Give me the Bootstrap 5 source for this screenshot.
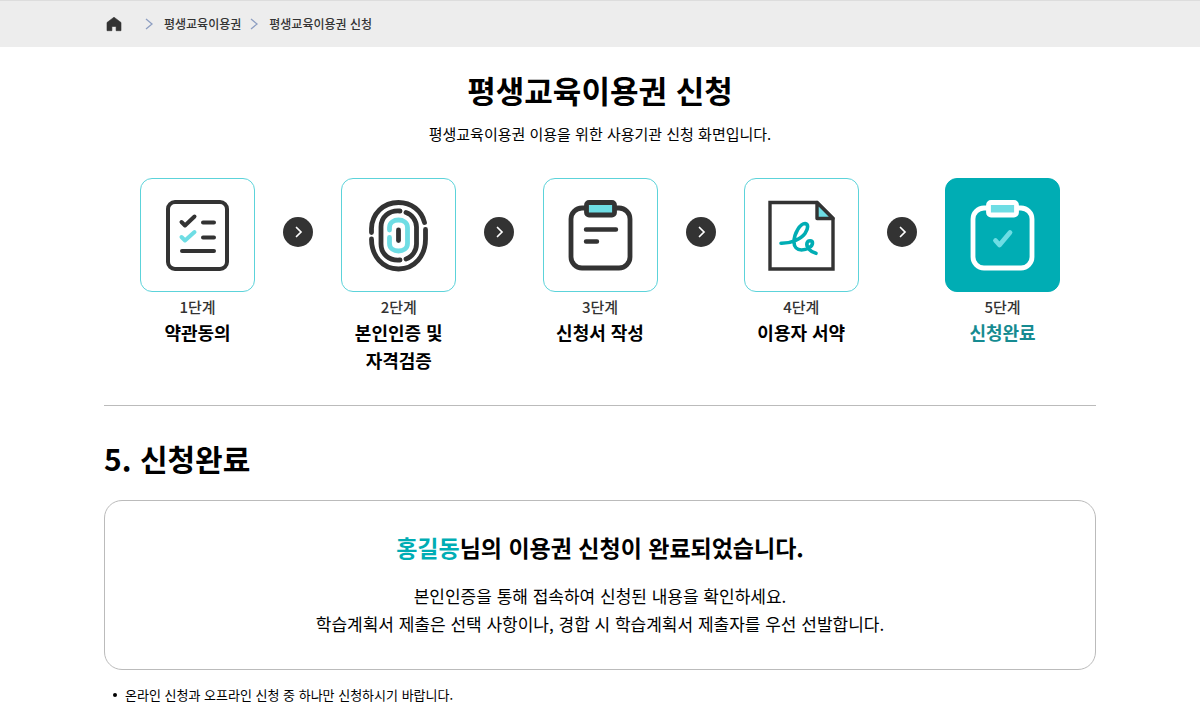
<!DOCTYPE html>
<html lang="ko">
<head>
<meta charset="utf-8">
<meta name="viewport" content="width=device-width, initial-scale=1">
<title>평생교육이용권 신청</title>
<link href="https://cdn.jsdelivr.net/npm/bootstrap@5.3.0/dist/css/bootstrap.min.css" rel="stylesheet">
<style>
  :root { --teal: #00adb4; --ink: #333; }
  body { font-family: "Noto Sans CJK KR", sans-serif; font-size: 15px; line-height: 24px; color: #000; background: #fff; }
  .page-width { padding-inline: 104px; }
  .crumb-bar { background: #ededed; border-top: 1px solid #ddd; }
  .crumb-bar ol { min-height: 46px; font-size: 12px; gap: 4px; }
  .crumb-bar a { color: var(--ink); text-decoration: none; font-weight: 500; }
  .crumb-bar li:first-child { margin-right: 16px; }
  .page-title { font-size: 31px; line-height: 44px; font-weight: 700; margin-bottom: 10px; }
  .intro { padding-top: 21px; }
  .step-list { padding: 32px 36px 0; }
  .step-item { width: 115px; }
  .step-tile { height: 114px; border: 1px solid #5cd3da; border-radius: 12px; }
  .step-label { font-weight: 500; line-height: 23px; color: var(--ink); margin-top: 3px; }
  .step-name { font-size: 18px; line-height: 28px; font-weight: 700; }
  .step-item.current .step-tile { background: var(--teal); border-color: var(--teal); }
  .step-item.current .step-name { color: #168b91; }
  .step-arrow { width: 30px; height: 30px; margin-top: 39px; }
  .rule-line { border-top: 1px solid #bbb; margin-top: 31px; }
  .section-title { font-size: 30px; line-height: 44px; font-weight: 700; margin: 30px 0 20px; }
  .result-box { border: 1px solid #bbb; border-radius: 18px; padding: 30px 24px 31px; }
  .result-title { font-size: 23px; line-height: 32px; font-weight: 700; margin-bottom: 19px; }
  .result-title span { color: var(--teal); }
  .result-text { font-size: 17px; line-height: 28px; }
  .notes { font-size: 13px; margin-top: 13px; padding-left: 9px; }
  .dot-item { gap: 8px; }
  .dot-item::before { content: ""; width: 4px; height: 4px; border-radius: 50%; background: #000; }
  svg { display: block; }
</style>
</head>
<body>
<header class="crumb-bar">
  <nav class="page-width" aria-label="위치">
    <ol class="list-unstyled d-flex align-items-center mb-0">
      <li><a href="#" aria-label="홈"><svg width="20" height="20" viewBox="0 0 20 20"><path d="M10 3.2 3 8.500V16.700h4.900v-4.200h4.200v4.200H17V8.500z" fill="#333" stroke="#333" stroke-linejoin="round" stroke-width=".6"/></svg></a></li>
      <li class="d-flex align-items-center"><svg class="me-2" width="12" height="14" viewBox="0 0 12 14"><path d="m2 2 6 5-6 5" fill="none" stroke="#8e9fc2" stroke-width="1.300"/></svg><a href="#">평생교육이용권</a></li>
      <li class="d-flex align-items-center ms-1"><svg class="me-2" width="12" height="14" viewBox="0 0 12 14"><path d="m2 2 6 5-6 5" fill="none" stroke="#8e9fc2" stroke-width="1.300"/></svg><a href="#" aria-current="page">평생교육이용권 신청</a></li>
    </ol>
  </nav>
</header>

<main class="page-width pb-3">
  <div class="intro text-center">
    <h1 class="page-title">평생교육이용권 신청</h1>
    <p class="mb-0">평생교육이용권 이용을 위한 사용기관 신청 화면입니다.</p>
  </div>

  <ol class="step-list list-unstyled d-flex justify-content-between text-center mb-0">
    <li class="step-item">
      <div class="step-tile d-flex align-items-center justify-content-center">
        <svg width="113" height="113" viewBox="0 0 113 113" fill="none" stroke="#333" stroke-width="4" stroke-linecap="round" stroke-linejoin="round"><rect x="27" y="23" width="59" height="67" rx="7"/><path d="m40.500 43 3.500 3.500 9.500-9M62 43.500h11M62 58.500h11M41 72h32"/><path d="m40.500 58 3.500 3.500 9.500-8.500" stroke="#6edde4"/></svg>
      </div>
      <div class="step-label">1단계</div>
      <div class="step-name">약관동의</div>
    </li>
    <li class="step-arrow" aria-hidden="true"><svg width="30" height="30" viewBox="0 0 30 30"><circle cx="15" cy="15" r="15" fill="#333"/><path d="m13.500 10.500 4.500 4.500-4.500 4.500" fill="none" stroke="#fff" stroke-width="1.700" stroke-linecap="round"/></svg></li>
    <li class="step-item">
      <div class="step-tile d-flex align-items-center justify-content-center">
        <svg width="113" height="113" viewBox="0 0 113 113" fill="none" stroke="#333" stroke-width="4.800" stroke-linecap="round"><path d="M29.500 53.500v-4C30 35 41 23.500 56.500 23.500c13 0 23 8 26 20"/><path d="M29.500 60c0 17 11 30 27 30s27-13 27-30v-9.500"/><path d="M58 32c-11-1-19 6-19 16v17c0 10 8 17 19 16M64 33.500c6 2 10.500 8 10.500 14.500v17c0 7-4.500 13-10.500 15"/><path d="M47.500 51v-2.500c0-10 18-10 18 0v16c0 10-18 10-18 0v-6" stroke="#6edde4"/><path d="M56.500 51v10.500"/></svg>
      </div>
      <div class="step-label">2단계</div>
      <div class="step-name">본인인증 및<br>자격검증</div>
    </li>
    <li class="step-arrow" aria-hidden="true"><svg width="30" height="30" viewBox="0 0 30 30"><circle cx="15" cy="15" r="15" fill="#333"/><path d="m13.500 10.500 4.500 4.500-4.500 4.500" fill="none" stroke="#fff" stroke-width="1.700" stroke-linecap="round"/></svg></li>
    <li class="step-item">
      <div class="step-tile d-flex align-items-center justify-content-center">
        <svg width="113" height="113" viewBox="0 0 113 113" fill="none" stroke="#333" stroke-width="4.800" stroke-linecap="round"><rect x="27" y="29" width="59" height="60" rx="11"/><rect x="42.500" y="23.500" width="28" height="12.500" rx="2.500" fill="#6edde4"/><path d="M42 50.500h30M42 62.500h11" stroke-width="4.400"/></svg>
      </div>
      <div class="step-label">3단계</div>
      <div class="step-name">신청서 작성</div>
    </li>
    <li class="step-arrow" aria-hidden="true"><svg width="30" height="30" viewBox="0 0 30 30"><circle cx="15" cy="15" r="15" fill="#333"/><path d="m13.500 10.500 4.500 4.500-4.500 4.500" fill="none" stroke="#fff" stroke-width="1.700" stroke-linecap="round"/></svg></li>
    <li class="step-item">
      <div class="step-tile d-flex align-items-center justify-content-center">
        <svg width="113" height="113" viewBox="0 0 113 113" fill="none" stroke="#333" stroke-width="3.400"><path d="M25 23.500h47l16 16V90H25z"/><path d="M72 23.500v16h16z" fill="#6edde4" stroke-linejoin="round"/><path d="M36 64.300C46 64.500 56 60 60 54.500c3.500-5 3.500-9.500 0-10C55.500 44.500 49 54 49 63c0 5 3 8 7.500 8C62 71 67.500 67.500 67.500 64c0-3-4.500-3-5.500 0-1 4 3 9 9 10.300" stroke="#00adb4" stroke-linecap="round" stroke-width="3.600"/></svg>
      </div>
      <div class="step-label">4단계</div>
      <div class="step-name">이용자 서약</div>
    </li>
    <li class="step-arrow" aria-hidden="true"><svg width="30" height="30" viewBox="0 0 30 30"><circle cx="15" cy="15" r="15" fill="#333"/><path d="m13.500 10.500 4.500 4.500-4.500 4.500" fill="none" stroke="#fff" stroke-width="1.700" stroke-linecap="round"/></svg></li>
    <li class="step-item current" aria-current="step">
      <div class="step-tile d-flex align-items-center justify-content-center">
        <svg width="113" height="113" viewBox="0 0 113 113" fill="none" stroke="#fff" stroke-width="4.800" stroke-linecap="round" stroke-linejoin="round"><rect x="27" y="29" width="59" height="60" rx="11"/><rect x="42.500" y="23.500" width="28" height="12.500" rx="2.500" fill="#6edde4"/><path d="m49.500 61.500 4 4.500L64 53.500" stroke="#6edde4"/></svg>
      </div>
      <div class="step-label">5단계</div>
      <div class="step-name">신청완료</div>
    </li>
  </ol>

  <div class="rule-line"></div>

  <section>
    <h2 class="section-title">5. 신청완료</h2>
    <div class="result-box text-center">
      <h3 class="result-title"><span>홍길동</span>님의 이용권 신청이 완료되었습니다.</h3>
      <p class="result-text mb-0">본인인증을 통해 접속하여 신청된 내용을 확인하세요.<br>학습계획서 제출은 선택 사항이나, 경합 시 학습계획서 제출자를 우선 선발합니다.</p>
    </div>
    <ul class="notes list-unstyled mb-0">
      <li class="dot-item d-flex align-items-center">온라인 신청과 오프라인 신청 중 하나만 신청하시기 바랍니다.</li>
    </ul>
  </section>
</main>
<script src="https://cdn.jsdelivr.net/npm/bootstrap@5.3.0/dist/js/bootstrap.bundle.min.js"></script>
</body>
</html>
